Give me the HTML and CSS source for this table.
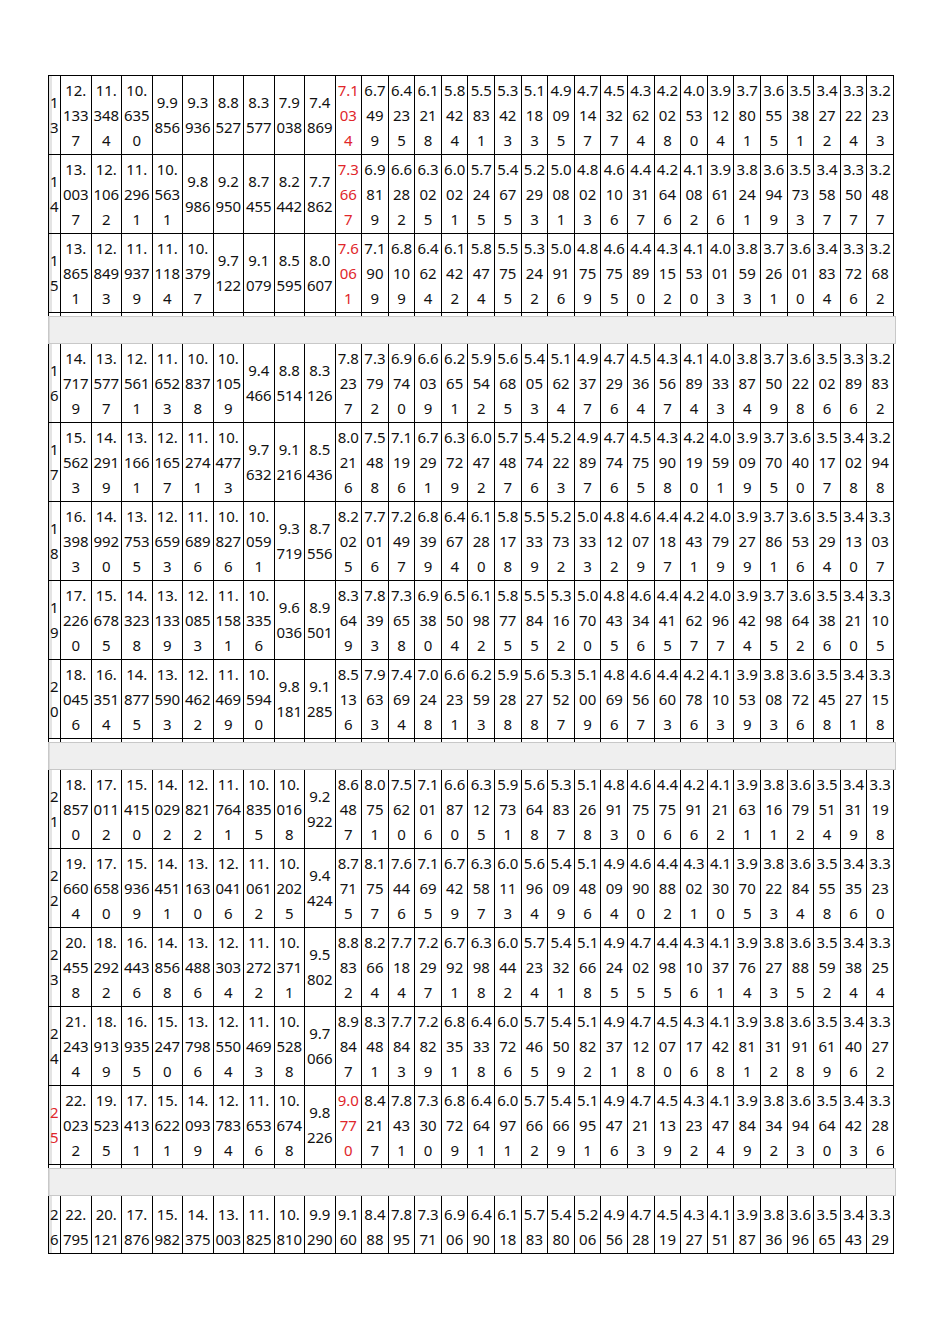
FILE: index.html
```html
<!DOCTYPE html>
<html>
<head>
<meta charset="utf-8">
<title>Table</title>
<link rel="stylesheet" href="styles.css">
</head>
<body>
<div class="page">
<table class="grid">
<colgroup>
<col class="c-lbl">
<col class="c-w"><col class="c-w"><col class="c-w"><col class="c-w"><col class="c-w"><col class="c-w"><col class="c-w"><col class="c-w"><col class="c-w">
<col class="c-n"><col class="c-n"><col class="c-n"><col class="c-n"><col class="c-n"><col class="c-n"><col class="c-n"><col class="c-n"><col class="c-n"><col class="c-n"><col class="c-n"><col class="c-n"><col class="c-n"><col class="c-n"><col class="c-n"><col class="c-n"><col class="c-n"><col class="c-n"><col class="c-n"><col class="c-n"><col class="c-n">
</colgroup>
<tbody>
<tr><td class="lbl">13</td><td>12.1337</td><td>11.3484</td><td>10.6350</td><td>9.9856</td><td>9.3936</td><td>8.8527</td><td>8.3577</td><td>7.9038</td><td>7.4869</td><td class="red">7.1034</td><td>6.7499</td><td>6.4235</td><td>6.1218</td><td>5.8424</td><td>5.5831</td><td>5.3423</td><td>5.1183</td><td>4.9095</td><td>4.7147</td><td>4.5327</td><td>4.3624</td><td>4.2028</td><td>4.0530</td><td>3.9124</td><td>3.7801</td><td>3.6555</td><td>3.5381</td><td>3.4272</td><td>3.3224</td><td>3.2233</td></tr>
<tr><td class="lbl">14</td><td>13.0037</td><td>12.1062</td><td>11.2961</td><td>10.5631</td><td>9.8986</td><td>9.2950</td><td>8.7455</td><td>8.2442</td><td>7.7862</td><td class="red">7.3667</td><td>6.9819</td><td>6.6282</td><td>6.3025</td><td>6.0021</td><td>5.7245</td><td>5.4675</td><td>5.2293</td><td>5.0081</td><td>4.8023</td><td>4.6106</td><td>4.4317</td><td>4.2646</td><td>4.1082</td><td>3.9616</td><td>3.8241</td><td>3.6949</td><td>3.5733</td><td>3.4587</td><td>3.3507</td><td>3.2487</td></tr>
<tr><td class="lbl">15</td><td>13.8651</td><td>12.8493</td><td>11.9379</td><td>11.1184</td><td>10.3797</td><td>9.7122</td><td>9.1079</td><td>8.5595</td><td>8.0607</td><td class="red">7.6061</td><td>7.1909</td><td>6.8109</td><td>6.4624</td><td>6.1422</td><td>5.8474</td><td>5.5755</td><td>5.3242</td><td>5.0916</td><td>4.8759</td><td>4.6755</td><td>4.4890</td><td>4.3152</td><td>4.1530</td><td>4.0013</td><td>3.8593</td><td>3.7261</td><td>3.6010</td><td>3.4834</td><td>3.3726</td><td>3.2682</td></tr>
<tr class="gap"><td class="gap-first"><div class="band"></div></td><td></td><td></td><td></td><td></td><td></td><td></td><td></td><td></td><td></td><td></td><td></td><td></td><td></td><td></td><td></td><td></td><td></td><td></td><td></td><td></td><td></td><td></td><td></td><td></td><td></td><td></td><td></td><td></td><td></td><td></td></tr>
<tr><td class="lbl">16</td><td>14.7179</td><td>13.5777</td><td>12.5611</td><td>11.6523</td><td>10.8378</td><td>10.1059</td><td>9.4466</td><td>8.8514</td><td>8.3126</td><td>7.8237</td><td>7.3792</td><td>6.9740</td><td>6.6039</td><td>6.2651</td><td>5.9542</td><td>5.6685</td><td>5.4053</td><td>5.1624</td><td>4.9377</td><td>4.7296</td><td>4.5364</td><td>4.3567</td><td>4.1894</td><td>4.0333</td><td>3.8874</td><td>3.7509</td><td>3.6228</td><td>3.5026</td><td>3.3896</td><td>3.2832</td></tr>
<tr><td class="lbl">17</td><td>15.5623</td><td>14.2919</td><td>13.1661</td><td>12.1657</td><td>11.2741</td><td>10.4773</td><td>9.7632</td><td>9.1216</td><td>8.5436</td><td>8.0216</td><td>7.5488</td><td>7.1196</td><td>6.7291</td><td>6.3729</td><td>6.0472</td><td>5.7487</td><td>5.4746</td><td>5.2223</td><td>4.9897</td><td>4.7746</td><td>4.5755</td><td>4.3908</td><td>4.2190</td><td>4.0591</td><td>3.9099</td><td>3.7705</td><td>3.6400</td><td>3.5177</td><td>3.4028</td><td>3.2948</td></tr>
<tr><td class="lbl">18</td><td>16.3983</td><td>14.9920</td><td>13.7535</td><td>12.6593</td><td>11.6896</td><td>10.8276</td><td>10.0591</td><td>9.3719</td><td>8.7556</td><td>8.2025</td><td>7.7016</td><td>7.2497</td><td>6.8399</td><td>6.4674</td><td>6.1280</td><td>5.8178</td><td>5.5339</td><td>5.2732</td><td>5.0333</td><td>4.8122</td><td>4.6079</td><td>4.4187</td><td>4.2431</td><td>4.0799</td><td>3.9279</td><td>3.7861</td><td>3.6536</td><td>3.5294</td><td>3.4130</td><td>3.3037</td></tr>
<tr><td class="lbl">19</td><td>17.2260</td><td>15.6785</td><td>14.3238</td><td>13.1339</td><td>12.0853</td><td>11.1581</td><td>10.3356</td><td>9.6036</td><td>8.9501</td><td>8.3649</td><td>7.8393</td><td>7.3658</td><td>6.9380</td><td>6.5504</td><td>6.1982</td><td>5.8775</td><td>5.5845</td><td>5.3162</td><td>5.0700</td><td>4.8435</td><td>4.6346</td><td>4.4415</td><td>4.2627</td><td>4.0967</td><td>3.9424</td><td>3.7985</td><td>3.6642</td><td>3.5386</td><td>3.4210</td><td>3.3105</td></tr>
<tr><td class="lbl">20</td><td>18.0456</td><td>16.3514</td><td>14.8775</td><td>13.5903</td><td>12.4622</td><td>11.4699</td><td>10.5940</td><td>9.8181</td><td>9.1285</td><td>8.5136</td><td>7.9633</td><td>7.4694</td><td>7.0248</td><td>6.6231</td><td>6.2593</td><td>5.9288</td><td>5.6278</td><td>5.3527</td><td>5.1009</td><td>4.8696</td><td>4.6567</td><td>4.4603</td><td>4.2786</td><td>4.1103</td><td>3.9539</td><td>3.8083</td><td>3.6726</td><td>3.5458</td><td>3.4271</td><td>3.3158</td></tr>
<tr class="gap"><td class="gap-first"><div class="band"></div></td><td></td><td></td><td></td><td></td><td></td><td></td><td></td><td></td><td></td><td></td><td></td><td></td><td></td><td></td><td></td><td></td><td></td><td></td><td></td><td></td><td></td><td></td><td></td><td></td><td></td><td></td><td></td><td></td><td></td><td></td></tr>
<tr><td class="lbl">21</td><td>18.8570</td><td>17.0112</td><td>15.4150</td><td>14.0292</td><td>12.8212</td><td>11.7641</td><td>10.8355</td><td>10.0168</td><td>9.2922</td><td>8.6487</td><td>8.0751</td><td>7.5620</td><td>7.1016</td><td>6.6870</td><td>6.3125</td><td>5.9731</td><td>5.6648</td><td>5.3837</td><td>5.1268</td><td>4.8913</td><td>4.6750</td><td>4.4756</td><td>4.2916</td><td>4.1212</td><td>3.9631</td><td>3.8161</td><td>3.6792</td><td>3.5514</td><td>3.4319</td><td>3.3198</td></tr>
<tr><td class="lbl">22</td><td>19.6604</td><td>17.6580</td><td>15.9369</td><td>14.4511</td><td>13.1630</td><td>12.0416</td><td>11.0612</td><td>10.2025</td><td>9.4424</td><td>8.7715</td><td>8.1757</td><td>7.6446</td><td>7.1695</td><td>6.7429</td><td>6.3587</td><td>6.0113</td><td>5.6964</td><td>5.4099</td><td>5.1486</td><td>4.9094</td><td>4.6900</td><td>4.4882</td><td>4.3021</td><td>4.1300</td><td>3.9705</td><td>3.8223</td><td>3.6844</td><td>3.5558</td><td>3.4356</td><td>3.3230</td></tr>
<tr><td class="lbl">23</td><td>20.4558</td><td>18.2922</td><td>16.4436</td><td>14.8568</td><td>13.4886</td><td>12.3034</td><td>11.2722</td><td>10.3711</td><td>9.5802</td><td>8.8832</td><td>8.2664</td><td>7.7184</td><td>7.2297</td><td>6.7921</td><td>6.3988</td><td>6.0442</td><td>5.7234</td><td>5.4321</td><td>5.1668</td><td>4.9245</td><td>4.7025</td><td>4.4985</td><td>4.3106</td><td>4.1371</td><td>3.9764</td><td>3.8273</td><td>3.6885</td><td>3.5592</td><td>3.4384</td><td>3.3254</td></tr>
<tr><td class="lbl">24</td><td>21.2434</td><td>18.9139</td><td>16.9355</td><td>15.2470</td><td>13.7986</td><td>12.5504</td><td>11.4693</td><td>10.5288</td><td>9.7066</td><td>8.9847</td><td>8.3481</td><td>7.7843</td><td>7.2829</td><td>6.8351</td><td>6.4338</td><td>6.0726</td><td>5.7465</td><td>5.4509</td><td>5.1822</td><td>4.9371</td><td>4.7128</td><td>4.5070</td><td>4.3176</td><td>4.1428</td><td>3.9811</td><td>3.8312</td><td>3.6918</td><td>3.5619</td><td>3.4406</td><td>3.3272</td></tr>
<tr><td class="lbl red">25</td><td>22.0232</td><td>19.5235</td><td>17.4131</td><td>15.6221</td><td>14.0939</td><td>12.7834</td><td>11.6536</td><td>10.6748</td><td>9.8226</td><td class="red">9.0770</td><td>8.4217</td><td>7.8431</td><td>7.3300</td><td>6.8729</td><td>6.4641</td><td>6.0971</td><td>5.7662</td><td>5.4669</td><td>5.1951</td><td>4.9476</td><td>4.7213</td><td>4.5139</td><td>4.3232</td><td>4.1474</td><td>3.9849</td><td>3.8342</td><td>3.6943</td><td>3.5640</td><td>3.4423</td><td>3.3286</td></tr>
<tr class="gap"><td class="gap-first"><div class="band"></div></td><td></td><td></td><td></td><td></td><td></td><td></td><td></td><td></td><td></td><td></td><td></td><td></td><td></td><td></td><td></td><td></td><td></td><td></td><td></td><td></td><td></td><td></td><td></td><td></td><td></td><td></td><td></td><td></td><td></td><td></td></tr>
<tr class="last"><td class="lbl">26</td><td>22.795</td><td>20.121</td><td>17.876</td><td>15.982</td><td>14.375</td><td>13.003</td><td>11.825</td><td>10.810</td><td>9.9290</td><td>9.160</td><td>8.488</td><td>7.895</td><td>7.371</td><td>6.906</td><td>6.490</td><td>6.118</td><td>5.783</td><td>5.480</td><td>5.206</td><td>4.956</td><td>4.728</td><td>4.519</td><td>4.327</td><td>4.151</td><td>3.987</td><td>3.836</td><td>3.696</td><td>3.565</td><td>3.443</td><td>3.329</td></tr>
</tbody>
</table>
</div>
</body>
</html>
```

FILE: styles.css
```css
html, body {
  margin: 0;
  padding: 0;
  background: #ffffff;
}

body {
  font-family: "Noto Sans", "Open Sans", sans-serif;
  color: #111111;
}

.page {
  padding: 75px 0 0 48px;
}

.grid {
  border-collapse: collapse;
  table-layout: fixed;
  width: 845px;
  font-size: 15px;
  line-height: 25px;
}

.c-lbl { width: 12px; }
.c-w { width: 30.5px; }
.c-n { width: 26.6px; }

.grid td {
  border: 1px solid #000000;
  padding: 1.5px 1px;
  text-align: center;
  vertical-align: middle;
  word-break: break-all;
}

.grid td.lbl {
  padding: 1.5px 0 1.5px 1px;
  text-align: left;
  box-shadow: inset 3px 0 0 #e4e4e4;
}

.grid .red {
  color: #e0262b;
}

.grid .gap td {
  height: 31px;
  padding: 0;
  border-bottom-style: hidden;
}

.grid .gap td.gap-first {
  position: relative;
}

.band {
  position: absolute;
  z-index: 1;
  top: 3px;
  left: -1px;
  width: 846px;
  height: 26px;
  background: #efefef;
  border: 1px solid #c8c8c8;
  box-shadow: inset 1px 0 0 #dadada;
}

.grid .last td {
  padding-top: 6px;
  padding-bottom: 1px;
}

.grid .last td.lbl {
  padding-left: 1px;
}
```
